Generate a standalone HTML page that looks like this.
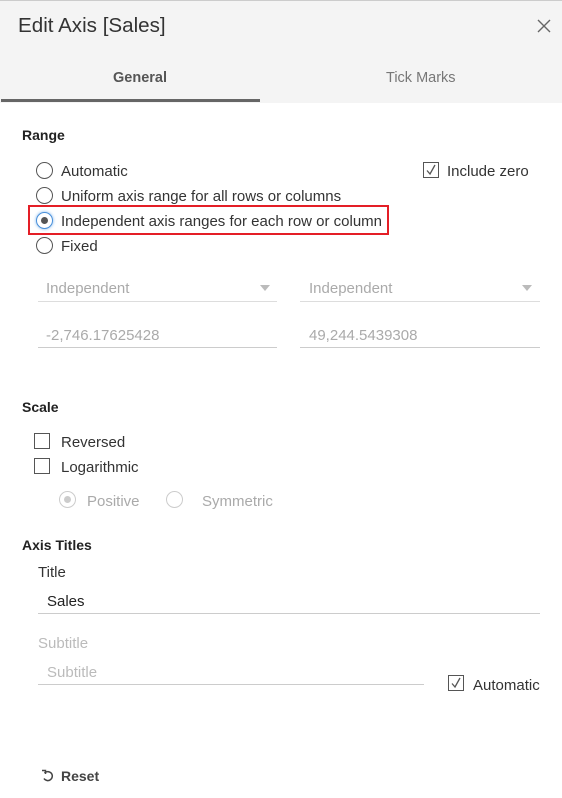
<!DOCTYPE html>
<html><head><style>
*{margin:0;padding:0;box-sizing:border-box}
body{width:562px;height:798px;background:#fff;font-family:"Liberation Sans",sans-serif;position:relative;overflow:hidden;color:#333}
.a{position:absolute;white-space:nowrap}
.hdr{position:absolute;left:0;top:0;width:562px;height:103px;background:#f4f4f4;border-top:1px solid #ccc}
.t14{font-size:15px;color:#333}
.b{font-weight:bold;font-size:14px;color:#222}
.r{position:absolute;width:17px;height:17px;border:1px solid #555;border-radius:50%;background:#fff}
.c{position:absolute;width:16px;height:16px;border:1px solid #555;background:#fff}
.g{color:#aaa}
.line{position:absolute;height:1px;background:#ccc}
</style></head><body>
<div class="hdr"></div>
<div class="a" style="left:18px;top:14px;font-size:20.6px;color:#333">Edit Axis [Sales]</div>
<svg class="a" style="left:537px;top:19px" width="14" height="14"><path d="M1 1L13 13M13 1L1 13" stroke="#666" stroke-width="1.4"/></svg>
<div class="a" style="left:113px;top:70px;font-size:14.5px;font-weight:bold;color:#555">General</div>
<div class="a" style="left:386px;top:70px;font-size:14.5px;color:#777">Tick Marks</div>
<div class="a" style="left:1px;top:99px;width:259px;height:3px;background:#666"></div>

<div class="a b" style="left:22px;top:127px">Range</div>
<div class="r" style="left:36px;top:162px"></div><div class="a t14" style="left:61px;top:163px">Automatic</div>
<div class="r" style="left:36px;top:187px"></div><div class="a t14" style="left:61px;top:188px">Uniform axis range for all rows or columns</div>
<div class="r" style="left:36px;top:212px;border-color:#4a90d9;box-shadow:0 0 3px #7ab3ee"><div style="position:absolute;left:4px;top:4px;width:7px;height:7px;border-radius:50%;background:#555"></div></div>
<div class="a t14" style="left:61px;top:213px">Independent axis ranges for each row or column</div>
<div class="a" style="left:28px;top:205px;width:361px;height:30px;border:2px solid #e41e26"></div>
<div class="r" style="left:36px;top:237px"></div><div class="a t14" style="left:61px;top:238px">Fixed</div>
<div class="c" style="left:423px;top:162px"><svg width="14" height="14" style="position:absolute;left:0;top:0"><path d="M3 7.5L6 11L11 2" fill="none" stroke="#555" stroke-width="1.3"/></svg></div>
<div class="a t14" style="left:447px;top:163px">Include zero</div>

<div class="a t14 g" style="left:46px;top:280px">Independent</div>
<div class="a" style="left:260px;top:285px;border:5px solid transparent;border-top:6px solid #bbb"></div>
<div class="line" style="left:38px;top:301px;width:239px;background:#ddd"></div>
<div class="a t14 g" style="left:309px;top:280px">Independent</div>
<div class="a" style="left:522px;top:285px;border:5px solid transparent;border-top:6px solid #bbb"></div>
<div class="line" style="left:300px;top:301px;width:240px;background:#ddd"></div>
<div class="a t14 g" style="left:46px;top:327px">-2,746.17625428</div>
<div class="line" style="left:38px;top:347px;width:239px"></div>
<div class="a t14 g" style="left:309px;top:327px">49,244.5439308</div>
<div class="line" style="left:300px;top:347px;width:240px"></div>

<div class="a b" style="left:22px;top:399px">Scale</div>
<div class="c" style="left:34px;top:433px"></div><div class="a t14" style="left:61px;top:434px">Reversed</div>
<div class="c" style="left:34px;top:458px"></div><div class="a t14" style="left:61px;top:459px">Logarithmic</div>
<div class="r" style="left:59px;top:491px;border-color:#ccc"><div style="position:absolute;left:4px;top:4px;width:7px;height:7px;border-radius:50%;background:#ccc"></div></div>
<div class="a t14 g" style="left:87px;top:493px">Positive</div>
<div class="r" style="left:166px;top:491px;border-color:#ccc"></div>
<div class="a t14 g" style="left:202px;top:493px">Symmetric</div>

<div class="a b" style="left:22px;top:537px">Axis Titles</div>
<div class="a t14" style="left:38px;top:564px">Title</div>
<div class="a t14" style="left:47px;top:593px;color:#222">Sales</div>
<div class="line" style="left:38px;top:613px;width:502px"></div>
<div class="a t14" style="left:38px;top:635px;color:#bbb">Subtitle</div>
<div class="a t14" style="left:47px;top:664px;color:#bbb">Subtitle</div>
<div class="line" style="left:38px;top:684px;width:386px"></div>
<div class="c" style="left:448px;top:675px"><svg width="14" height="14" style="position:absolute;left:0;top:0"><path d="M3 7.5L6 11L11 2" fill="none" stroke="#555" stroke-width="1.3"/></svg></div>
<div class="a t14" style="left:473px;top:677px">Automatic</div>

<svg class="a" style="left:41px;top:769px" width="13" height="13"><path d="M3.5 4A4.5 4.5 0 1 1 3 9.5" fill="none" stroke="#444" stroke-width="1.5"/><path d="M1 1.5L4.5 1.5L4.5 5" fill="none" stroke="#444" stroke-width="1.5"/></svg>
<div class="a b" style="left:61px;top:768px;color:#444">Reset</div>
</body></html>
